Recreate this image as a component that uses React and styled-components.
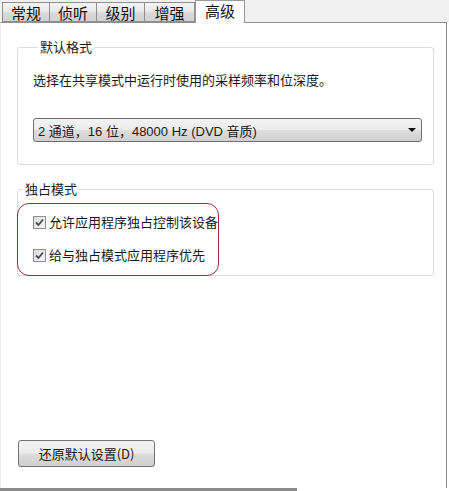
import React from 'react';
import styled, { createGlobalStyle } from 'styled-components';

const GlobalStyle = createGlobalStyle`
  html, body {
    margin: 0;
    padding: 0;
    background: #ffffff;
  }
  body {
    font-family: "Liberation Sans", "Noto Sans CJK SC", sans-serif;
    font-size: 13px;
    color: #1a1a1a;
  }
`;

const tabs = [
  { label: '常规', width: 48 },
  { label: '侦听', width: 47 },
  { label: '级别', width: 48 },
  { label: '增强', width: 50 },
  { label: '高级', width: 50, active: true },
];

const Window = styled.div`
  width: 449px;
  height: 491px;
  display: flex;
  flex-direction: column;
  background: #ffffff;
  overflow: hidden;
`;

const TabStrip = styled.div`
  height: 22px;
  flex-shrink: 0;
  display: flex;
  align-items: flex-end;
  padding-left: 2px;
  background: #f0f0f0;
  position: relative;
  z-index: 1;
`;

const Tab = styled.div`
  box-sizing: border-box;
  width: ${(p) => p.$width}px;
  height: ${(p) => (p.$active ? 23 : 20)}px;
  margin-bottom: ${(p) => (p.$active ? -1 : 0)}px;
  display: flex;
  align-items: center;
  justify-content: center;
  font-family: "Noto Sans CJK SC", sans-serif;
  font-size: 15px;
  color: #111;
  border: 1px solid ${(p) => (p.$active ? '#9a9a9a' : '#8e8f8f')};
  border-bottom: ${(p) => (p.$active ? 'none' : '1px solid #8e8f8f')};
  border-left-width: ${(p) => (p.$first || p.$active ? 1 : 0)}px;
  background: ${(p) =>
    p.$active
      ? '#ffffff'
      : 'linear-gradient(#f4f4f4 0%, #e9e9e9 45%, #d9d9d9 55%, #d2d2d2 100%)'};
  padding-bottom: ${(p) => (p.$active ? 3 : 0)}px;
`;

const Panel = styled.div`
  flex: 1;
  min-height: 0;
  width: 447px;
  box-sizing: border-box;
  border-top: 1px solid #8e8f8f;
  border-right: 1px solid #8a8a8a;
  border-left: 1px solid #ececec;
  padding: 15px 12px 0 16px;
`;

const Group = styled.fieldset`
  display: block;
  margin: ${(p) => p.$top || 0}px 0 0 0;
  min-width: 0;
  border: 1px solid #d8dde2;
  border-radius: 3px;
  padding: ${(p) => p.$pad};
`;

const Legend = styled.legend`
  font-family: "Noto Sans CJK SC", sans-serif;
  font-size: 13px;
  line-height: 18px;
  padding: 0 2px;
  margin-left: 5px;
  color: #1a1a1a;
`;

const Description = styled.div`
  font-family: "Noto Sans CJK SC", sans-serif;
  line-height: 18px;
`;

const Select = styled.div`
  margin-top: 29px;
  height: 24px;
  box-sizing: border-box;
  display: flex;
  align-items: center;
  justify-content: space-between;
  padding: 0 5px 0 4px;
  border: 1px solid #707070;
  border-radius: 3px;
  background: linear-gradient(#f3f3f3 0%, #ebebeb 48%, #dddddd 52%, #d0d0d0 100%);
  font-size: 13px;
`;

const Arrow = styled.span`
  width: 0;
  height: 0;
  border-left: 4px solid transparent;
  border-right: 4px solid transparent;
  border-top: 4px solid #111;
`;

const Highlight = styled.div`
  width: 202px;
  height: 73px;
  box-sizing: border-box;
  margin: 0 0 -1px -1px;
  border: 1px solid #a4283c;
  border-radius: 12px;
  padding: 9px 0 0 15px;
  display: flex;
  flex-direction: column;
  gap: 15px;
`;

const CheckRow = styled.label`
  display: flex;
  align-items: center;
  gap: 3px;
  height: 18px;
  font-family: "Noto Sans CJK SC", sans-serif;
  line-height: 18px;
`;

const Box = styled.span`
  width: 13px;
  height: 13px;
  box-sizing: border-box;
  border: 1px solid #8f8f8f;
  background: linear-gradient(135deg, #dcdcdc, #f6f6f6);
  display: flex;
  align-items: center;
  justify-content: center;
`;

const Actions = styled.div`
  display: flex;
  padding: 164px 0 0 1px;
`;

const Button = styled.button`
  width: 137px;
  height: 27px;
  box-sizing: border-box;
  border: 1px solid #707070;
  border-radius: 3px;
  background: linear-gradient(#f3f3f3 0%, #ebebeb 48%, #dddddd 52%, #cfcfcf 100%);
  font-family: "Noto Sans CJK SC", sans-serif;
  font-size: 13px;
  color: #1a1a1a;
  padding: 0;
`;

const BottomEdge = styled.div`
  flex-shrink: 0;
  width: 297px;
  height: 3px;
  background: #8a8a8a;
`;

const Check = () => (
  <Box>
    <svg width="9" height="9" viewBox="0 0 9 9">
      <path d="M1 4.5 L3.5 7 L8 1.5" fill="none" stroke="#3c4a68" strokeWidth="1.8" />
    </svg>
  </Box>
);

export default function App() {
  return (
    <>
      <GlobalStyle />
      <Window>
        <TabStrip>
          {tabs.map((t, i) => (
            <Tab key={t.label} $width={t.width} $active={t.active} $first={i === 0}>
              {t.label}
            </Tab>
          ))}
        </TabStrip>
        <Panel>
          <Group $pad="15px 11px 22px 15px">
            <Legend>默认格式</Legend>
            <Description>选择在共享模式中运行时使用的采样频率和位深度。</Description>
            <Select>
              <span>2 通道，16 位，48000 Hz (DVD 音质)</span>
              <Arrow />
            </Select>
          </Group>
          <Group $top={15} $pad="5px 0 0 0">
            <Legend>独占模式</Legend>
            <Highlight>
              <CheckRow>
                <Check />
                允许应用程序独占控制该设备
              </CheckRow>
              <CheckRow>
                <Check />
                给与独占模式应用程序优先
              </CheckRow>
            </Highlight>
          </Group>
          <Actions>
            <Button>还原默认设置(D)</Button>
          </Actions>
        </Panel>
        <BottomEdge />
      </Window>
    </>
  );
}
